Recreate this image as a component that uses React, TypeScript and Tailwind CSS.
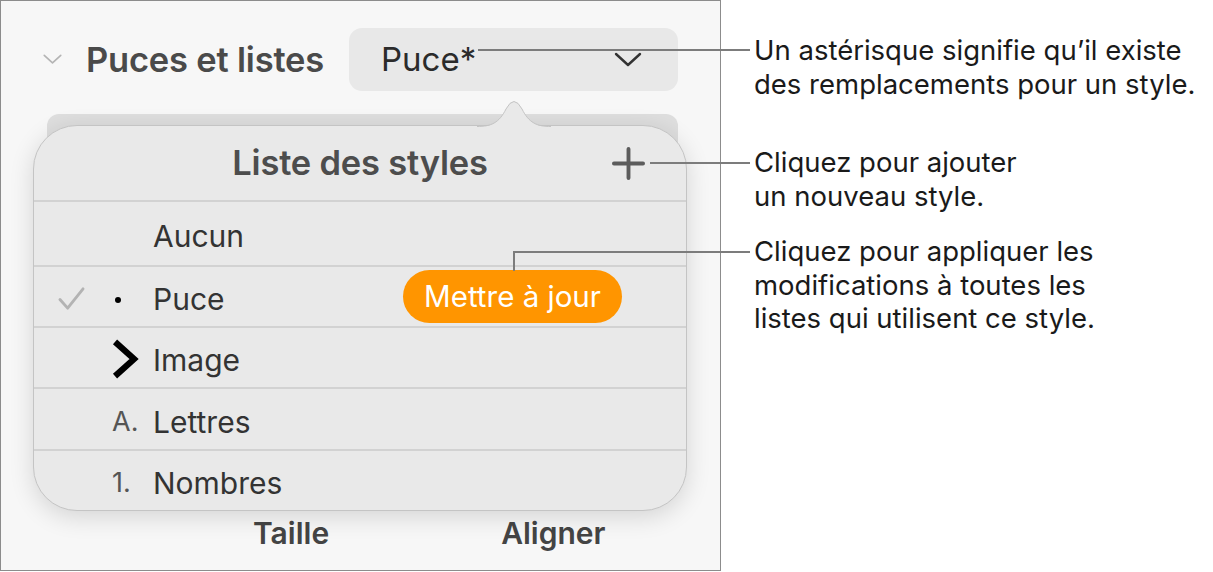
import React from "react";

const rows = [
  { label: "Aucun", mark: null, h: "h-[65px]" },
  { label: "Puce", mark: "bullet", h: "h-[61px]", checked: true, update: true },
  { label: "Image", mark: "image", h: "h-[61px]" },
  { label: "Lettres", mark: "A.", h: "h-[62px]" },
  { label: "Nombres", mark: "1.", h: "h-[61px]" },
];

function Chevron({ className }: { className?: string }) {
  return (
    <svg viewBox="0 0 28 16" className={className} fill="none">
      <path d="M2 2 L14 13 L26 2" stroke="currentColor" strokeWidth="2.4" strokeLinecap="round" strokeLinejoin="round" />
    </svg>
  );
}

function Mark({ mark }: { mark: string | null }) {
  if (mark === "bullet") {
    return <span className="ml-[3px] mt-[6px] block h-[6px] w-[6px] rounded-full bg-black" />;
  }
  if (mark === "image") {
    return (
      <svg viewBox="0 0 28 42" className="mt-[2px] h-[40px] w-[27px]">
        <path d="M3 3 L23 21 L3 39" stroke="black" strokeWidth="6.5" fill="none" strokeLinejoin="miter" />
      </svg>
    );
  }
  if (mark) {
    return <span className="pt-[6px] text-[27px] text-[#555]">{mark}</span>;
  }
  return null;
}

export default function App() {
  return (
    <div className="relative flex h-[572px] w-[1213px] bg-white font-['Inter',sans-serif]">
      {/* inspector panel */}
      <div className="relative h-[571px] w-[721px] shrink-0 border border-[#8c8c8c] bg-[#f7f7f7]">
        <div className="flex items-center pt-[27px]">
          <Chevron className="ml-[41px] h-[11px] w-[21px] text-[#b4b4b4]" />
          <span className="ml-[23px] w-[263px] text-[34.5px] font-semibold tracking-[-0.2px] text-[#4a4a4a]">Puces et listes</span>
          <div className="flex h-[63px] w-[329px] items-center justify-between rounded-[13px] bg-[#e8e8e8] pl-[32px] pr-[36px]">
            <span className="text-[33px] text-[#2b2b2b]">Puce*</span>
            <Chevron className="h-[16px] w-[28px] text-[#333]" />
          </div>
        </div>

        {/* popover */}
        <div className="relative mt-[34px]">
          <div className="absolute left-[46px] top-[-11px] h-[60px] w-[631px] rounded-[12px] bg-[#dedede]" />
          <div className="relative ml-[32px] w-[654px] rounded-[44px] border border-[#c4c4c4] bg-[#e9e9e9] shadow-[0_6px_24px_rgba(0,0,0,0.14)]">
            <svg viewBox="0 0 74 30" className="absolute left-[443px] top-[-29px] h-[30px] w-[74px]">
              <path d="M0 30 C14 30 22 26 29 12 Q37 -3 45 12 C52 26 60 30 74 30 Z" fill="#e9e9e9" />
              <path d="M0 29.5 C14 29.5 22 26 29 12 Q37 -3 45 12 C52 26 60 29.5 74 29.5" fill="none" stroke="#c4c4c4" strokeWidth="1" />
            </svg>
            <div className="relative flex h-[74px] items-center justify-center">
              <span className="text-[34.5px] font-semibold tracking-[-0.2px] text-[#4d4d4d]">Liste des styles</span>
              <svg viewBox="0 0 34 34" className="absolute left-[578px] top-[21px] h-[33px] w-[33px]">
                <path d="M17 2 V32 M2 17 H32" stroke="#5c5c5c" strokeWidth="4" strokeLinecap="round" />
              </svg>
            </div>
            {rows.map((r) => (
              <div key={r.label} className={`flex items-center border-t-2 border-[#d2d2d2] ${r.h}`}>
                <div className="flex w-[78px] pl-[23px] pt-[4px]">
                  {r.checked && (
                    <svg viewBox="0 0 30 26" className="h-[25px] w-[29px]">
                      <path d="M3 14 L11 23 L27 3" stroke="#b3b3b3" strokeWidth="3" fill="none" strokeLinecap="round" strokeLinejoin="round" />
                    </svg>
                  )}
                </div>
                <div className="flex w-[41px] items-center">
                  <Mark mark={r.mark} />
                </div>
                <span className="w-[250px] pt-[6px] text-[30px] text-[#333]">{r.label}</span>
                {r.update && (
                  <span className="flex h-[53px] w-[219px] items-center justify-center rounded-full bg-[#ff9500] text-[29.5px] text-white">
                    Mettre à jour
                  </span>
                )}
              </div>
            ))}
          </div>
        </div>

        <div className="flex text-[30px] font-semibold text-[#444]">
          <span className="ml-[252px]">Taille</span>
          <span className="ml-[172px]">Aligner</span>
        </div>
      </div>

      {/* callouts */}
      <div className="pl-[33px] pt-[34px] text-[27.5px] leading-[33.5px] text-[#1a1a1a]">
        <p>
          Un astérisque signifie qu’il existe
          <br />
          des remplacements pour un style.
        </p>
        <p className="mt-[45px]">
          Cliquez pour ajouter
          <br />
          un nouveau style.
        </p>
        <p className="mt-[22px]">
          Cliquez pour appliquer les
          <br />
          modifications à toutes les
          <br />
          listes qui utilisent ce style.
        </p>
      </div>

      <div className="absolute left-[478px] top-[49px] h-[2px] w-[272px] bg-[#7c7c7c]" />
      <div className="absolute left-[650px] top-[162px] h-[2px] w-[100px] bg-[#7c7c7c]" />
      <div className="absolute left-[513px] top-[251px] h-[2px] w-[237px] bg-[#7c7c7c]" />
      <div className="absolute left-[513px] top-[251px] h-[20px] w-[2px] bg-[#7c7c7c]" />
    </div>
  );
}
